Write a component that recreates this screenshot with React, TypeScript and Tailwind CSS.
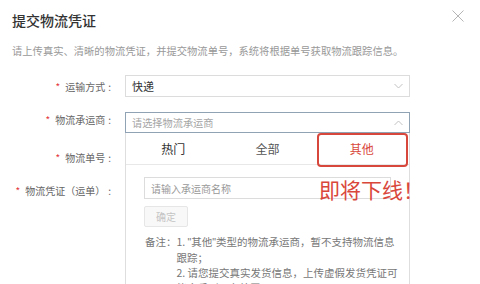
import React from "react";

const Label = ({ text }: { text: string }) => (
  <div className="flex items-center justify-end pr-[14px] text-[10px] text-[#666]">
    <span className="text-[#e4393c] text-[10px] mr-[5px]">*</span>
    <span>{text}</span>
    <span className="ml-[3px]">:</span>
  </div>
);

const Chevron = ({ up }: { up?: boolean }) => (
  <svg width="9" height="6" viewBox="0 0 9 6" className="mr-[6px]">
    <path
      d={up ? "M0.5 5L4.5 1L8.5 5" : "M0.5 1L4.5 5L8.5 1"}
      fill="none"
      stroke="#c2c2c2"
      strokeWidth="1"
    />
  </svg>
);

export default function App() {
  return (
    <div className="relative w-[480px] h-[284px] overflow-hidden bg-white font-['Noto_Sans_CJK_SC',sans-serif]">
      {/* header */}
      <div className="flex justify-between items-start pt-[11px] pl-[12px] pr-[16px]">
        <h2 className="text-[14px] leading-[18px] text-[#333] font-medium">提交物流凭证</h2>
        <svg width="12" height="12" viewBox="0 0 12 12" className="mt-[-1px]">
          <path d="M0.5 0.5L11.5 11.5M11.5 0.5L0.5 11.5" stroke="#b5b5b5" strokeWidth="1" />
        </svg>
      </div>
      <p className="mt-[15px] pl-[12px] text-[10.3px] leading-[14px] text-[#999] whitespace-nowrap">
        请上传真实、清晰的物流凭证，并提交物流单号，系统将根据单号获取物流跟踪信息。
      </p>

      {/* row 1 */}
      <div className="mt-[17px] grid grid-cols-[125px_285px]">
        <Label text="运输方式" />
        <div className="h-[22px] border border-[#dcdcdc] flex items-center justify-between pl-[6px]">
          <span className="text-[11px] text-[#333]">快递</span>
          <Chevron />
        </div>
      </div>

      {/* row 2 with open dropdown */}
      <div className="mt-[15px] flex h-[200px]">
        <div className="w-[125px] flex flex-col">
          <div className="h-[21px]">
            <Label text="物流承运商" />
          </div>
          <div className="h-[21px] mt-[14px] flex items-center justify-end">
            <Label text="物流单号" />
          </div>
          <div className="h-[21px] mt-[12px] flex items-center justify-end">
            <Label text="物流凭证（运单）" />
          </div>
        </div>
        <div className="w-[285px] flex flex-col">
          <div className="h-[21px] border border-[#8fa3b4] flex items-center justify-between pl-[6px]">
            <span className="text-[10.2px] text-[#a5a5a5]">请选择物流承运商</span>
            <Chevron up />
          </div>
          <div className="flex-1 border-l border-r border-[#dedede]">
            <div className="grid grid-cols-3 h-[32px] border-b border-[#e8e8e8] text-[12px]">
              <div className="flex items-center justify-center text-[#333]">热门</div>
              <div className="flex items-center justify-center text-[#555]">全部</div>
              <div className="flex items-center justify-center text-[#d9473b]">其他</div>
            </div>
            <div className="mt-[12px] mx-[18px] h-[22px] border border-[#dcdcdc] flex items-center pl-[6px]">
              <span className="text-[10px] text-[#999]">请输入承运商名称</span>
            </div>
            <div className="mt-[7px] ml-[18px] w-[44px] h-[21px] border border-[#e6e6e6] bg-[#f8f8f8] rounded-[2px] flex items-center justify-center text-[10px] text-[#c4c4c4]">
              确定
            </div>
            <div className="mt-[7px] ml-[19px] flex text-[10.5px] leading-[15px] text-[#777] whitespace-nowrap">
              <span>备注：</span>
              <div>
                <div>
                  1. <span className="font-['Liberation_Sans',sans-serif]">&quot;</span>其他
                  <span className="font-['Liberation_Sans',sans-serif]">&quot;</span>类型的物流承运商，暂不支持物流信息
                </div>
                <div>跟踪；</div>
                <div>2. 请您提交真实发货信息，上传虚假发货凭证可</div>
                <div>能会受到平台处罚。</div>
              </div>
            </div>
          </div>
        </div>
      </div>

      {/* annotation overlays */}
      <div className="absolute left-[317px] top-[133px] w-[91px] h-[34px] border-2 border-[#d7473c] rounded-[4px]" />
      <div className="absolute left-[319px] top-[175px] text-[21px] leading-[28px] text-[#d9473b] whitespace-nowrap">
        即将下线！
      </div>
    </div>
  );
}
